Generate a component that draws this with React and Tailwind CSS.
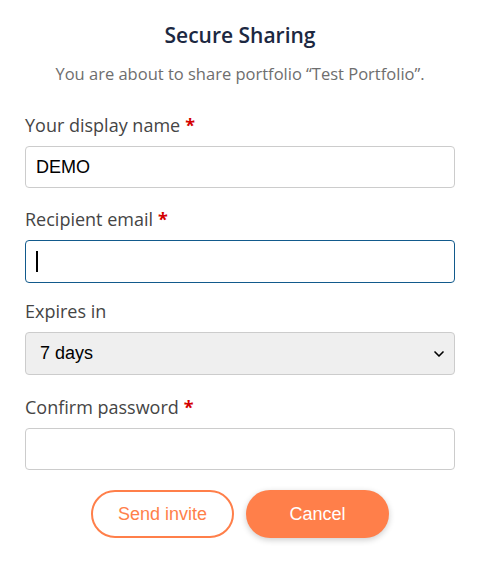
import { ChevronDown } from 'lucide-react';

const UI_FONT = "font-['Open_Sans',sans-serif]";

function Label({ children, required }) {
  return (
    <label className={`block ${UI_FONT} text-[18px] leading-[24px] text-[#454545] mb-[9px]`}>
      {children}
      {required && <span className="text-[#d40000] font-bold ml-[5px]">*</span>}
    </label>
  );
}

export default function App() {
  return (
    <div className="w-[477px] h-[562px] bg-white pl-[25px] pr-[22px] pt-[20px]">
      <h1 className={`${UI_FONT} text-center text-[21px] leading-[30px] font-semibold text-[#1c2841]`}>
        Secure Sharing
      </h1>
      <p className={`${UI_FONT} text-center text-[16.5px] leading-[22px] text-[#6e6e6e] mt-[13px]`}>
        You are about to share portfolio “Test Portfolio”.
      </p>

      <div className="mt-[28px]">
        <Label required>Your display name</Label>
        <input
          type="text"
          defaultValue="DEMO"
          className="w-full h-[42px] rounded-[4px] border border-[#cccccc] px-[10px] font-['Liberation_Sans',sans-serif] text-[18px] text-black outline-none"
        />
      </div>

      <div className="mt-[19px]">
        <Label required>Recipient email</Label>
        <div className="w-full h-[43px] rounded-[4px] border border-[#125a8c] px-[10px] flex items-center">
          <span className="block w-[2px] h-[21px] bg-black" />
        </div>
      </div>

      <div className="mt-[16px]">
        <Label>Expires in</Label>
        <div className="w-full h-[43px] rounded-[4px] border border-[#cccccc] bg-[#efefef] pl-[14px] pr-[7px] flex items-center justify-between">
          <span className="font-['Liberation_Sans',sans-serif] text-[18px] text-black">7 days</span>
          <ChevronDown className="w-[16px] h-[16px] text-black" strokeWidth={2.5} />
        </div>
      </div>

      <div className="mt-[20px]">
        <Label required>Confirm password</Label>
        <input
          type="password"
          className="w-full h-[42px] rounded-[4px] border border-[#cccccc] px-[10px] outline-none"
        />
      </div>

      <div className="mt-[20px] flex justify-center gap-[12px]">
        <button className="w-[143px] h-[48px] rounded-full border-2 border-[#ff7f4a] bg-white text-[#ff7f4a] font-['Liberation_Sans',sans-serif] text-[18px]">
          Send invite
        </button>
        <button className="w-[143px] h-[48px] rounded-full bg-[#ff7f4a] text-white font-['Liberation_Sans',sans-serif] text-[18px] shadow-[0_2px_6px_rgba(0,0,0,0.2)]">
          Cancel
        </button>
      </div>
    </div>
  );
}
